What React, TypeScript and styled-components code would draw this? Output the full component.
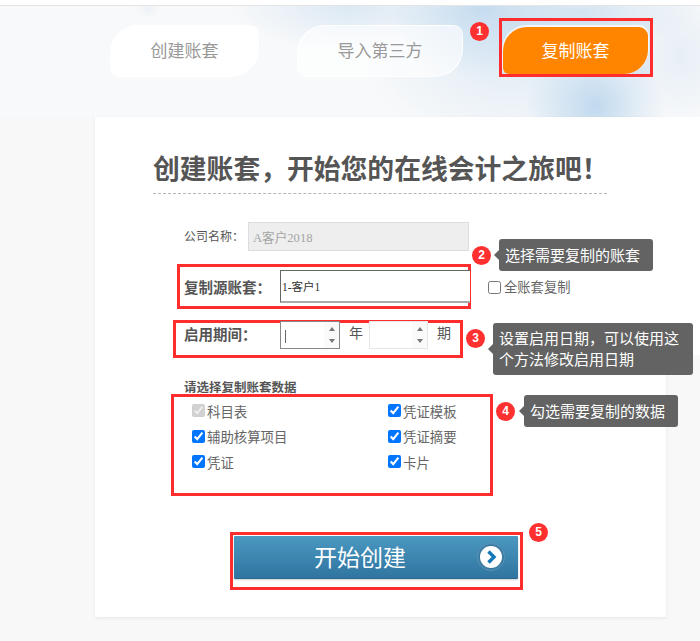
import React from "react";
import styled, { createGlobalStyle } from "styled-components";

const GlobalStyle = createGlobalStyle`
  html, body {
    margin: 0;
    padding: 0;
    background: #f8f8f8;
  }
  * {
    box-sizing: border-box;
  }
`;

const Page = styled.div`
  position: relative;
  width: 700px;
  height: 641px;
  overflow: hidden;
  background: #f8f8f8;
  font-family: "Liberation Sans", "Noto Sans CJK SC", sans-serif;
  color: #555;
`;

const TopBar = styled.div`
  height: 6px;
  background: #fff;
  border-bottom: 1px solid #e4e4e4;
`;

const Hero = styled.div`
  height: 111px;
  padding: 19px 0 0 110px;
  display: flex;
  align-items: flex-start;
  background:
    radial-gradient(ellipse 90px 70px at 480px 0px, rgba(192, 217, 238, 0.9), transparent),
    radial-gradient(ellipse 70px 70px at 595px 100px, rgba(190, 216, 238, 0.95), transparent),
    radial-gradient(ellipse 120px 40px at 580px 5px, rgba(205, 224, 240, 0.8), transparent),
    radial-gradient(ellipse 120px 45px at 350px 0px, rgba(212, 228, 242, 0.8), transparent),
    radial-gradient(ellipse 150px 90px at 510px 50px, rgba(218, 232, 244, 0.8), transparent),
    radial-gradient(ellipse 60px 70px at 680px 50px, rgba(226, 236, 245, 0.8), transparent),
    radial-gradient(ellipse 14px 9px at 148px 3px, rgba(226, 235, 244, 0.5), transparent),
    #f8f9fa;
`;

const Tab = styled.div<{ $width: number; $outlined?: boolean; $offset?: number }>`
  width: ${(p) => p.$width}px;
  height: 52px;
  margin-left: ${(p) => p.$offset ?? 0}px;
  padding-bottom: 3px;
  border-radius: 28px 10px 28px 10px;
  display: flex;
  align-items: center;
  justify-content: center;
  font-size: 17px;
  color: #999;
  background: rgba(255, 255, 255, ${(p) => (p.$outlined ? 0.6 : 0.95)});
  border: ${(p) => (p.$outlined ? "1px solid rgba(255, 255, 255, 0.9)" : "none")};
`;

const TabHighlight = styled.div`
  width: 154px;
  height: 59px;
  margin: -7px 0 0 36px;
  padding: 6px 2px 0 1px;
  border: 3px solid #ff2d2d;
  background: rgba(205, 222, 238, 0.5);
`;

const ActiveTab = styled.div`
  height: 47px;
  padding-bottom: 3px;
  border-radius: 24px 9px 24px 6px;
  display: flex;
  align-items: center;
  justify-content: center;
  font-size: 17px;
  color: #fff;
  background: #ff8400;
  box-shadow: 0 -1px 0 1px rgba(255, 255, 255, 0.7);
`;

const Card = styled.div`
  width: 571px;
  height: 500px;
  margin-left: 95px;
  padding: 33px 0 0 58px;
  background: #fff;
  box-shadow: 0 1px 3px rgba(0, 0, 0, 0.08);
`;

const SidePatch = styled.div`
  position: absolute;
  left: 666px;
  top: 117px;
  width: 34px;
  height: 238px;
  background: #fff;
`;

const Title = styled.h1`
  width: 454px;
  height: 44px;
  margin: 0;
  border-bottom: 1px dashed #b5b5b5;
  font-size: 26.8px;
  line-height: 41px;
  font-weight: bold;
  color: #555;
  white-space: nowrap;
`;

const NameRow = styled.div`
  height: 29px;
  margin: 28px 0 0 31px;
  display: flex;
  align-items: center;
`;

const NameLabel = styled.span`
  width: 64px;
  padding-bottom: 2px;
  font-size: 12px;
  color: #555;
`;

const NameInput = styled.div`
  width: 221px;
  height: 29px;
  padding-left: 4px;
  display: flex;
  align-items: center;
  background: #eee;
  border: 1px solid #ddd;
  font-family: "Liberation Serif", "Noto Sans CJK SC", serif;
  font-size: 12.6px;
  color: #a5a5a5;
`;

const SourceLine = styled.div`
  margin: 13px 0 0 24px;
  display: flex;
  align-items: center;
`;

const HighlightRow = styled.div<{ $width: number; $height: number; $pad: number }>`
  width: ${(p) => p.$width}px;
  height: ${(p) => p.$height}px;
  padding-left: ${(p) => p.$pad}px;
  display: flex;
  align-items: center;
  border: 3px solid #ff2d2d;
`;

const FieldLabel = styled.span<{ $width: number }>`
  width: ${(p) => p.$width}px;
  padding-bottom: 1px;
  font-size: 14.5px;
  font-weight: bold;
  color: #555;
  flex-shrink: 0;
  white-space: nowrap;
`;

const SourceInput = styled.div`
  width: 190px;
  height: 33px;
  padding-left: 1px;
  flex-shrink: 0;
  display: flex;
  align-items: center;
  border: 1px solid #666;
  border-bottom: 2px solid #aaa;
  border-right: none;
  background: #fff;
  font-family: "Liberation Serif", "Noto Sans CJK SC", serif;
  font-size: 11.5px;
  color: #333;
`;

const WholeCopy = styled.label`
  margin-left: 17px;
  display: flex;
  align-items: center;
  font-size: 13.3px;
  color: #666;
  white-space: nowrap;

  input {
    width: 13px;
    height: 13px;
    margin: 1px 3px 0 0;
  }
`;

const PeriodBox = styled(HighlightRow)`
  margin: 11px 0 0 20px;
  align-items: flex-start;
`;

const PeriodLabel = styled(FieldLabel)`
  line-height: 24px;
`;

const PeriodField = styled.div`
  margin-top: -2px;
  display: flex;
  align-items: flex-start;
`;

const Spinner = styled.div<{ $width: number; $focused?: boolean }>`
  position: relative;
  width: ${(p) => p.$width}px;
  height: 28px;
  border: 1px solid ${(p) => (p.$focused ? "#888" : "#e6e6e6")};
  background: #fff;
`;

const Caret = styled.span`
  position: absolute;
  left: 4px;
  top: 8px;
  width: 1px;
  height: 13px;
  background: #666;
`;

const SpinArrows = styled.div`
  position: absolute;
  top: 0;
  right: 0;
  bottom: 0;
  width: 15px;
  background: #fafafa;
  display: flex;
  flex-direction: column;
  align-items: center;
  justify-content: space-between;
  padding: 5px 0;
`;

const ArrowUp = styled.i`
  border: 3px solid transparent;
  border-top: none;
  border-bottom: 4px solid #777;
`;

const ArrowDown = styled.i`
  border: 3px solid transparent;
  border-bottom: none;
  border-top: 4px solid #777;
`;

const Unit = styled.span<{ $width: number }>`
  width: ${(p) => p.$width}px;
  padding-left: 9px;
  font-size: 14px;
  line-height: 24px;
  color: #555;
`;

const SectionTitle = styled.div`
  height: 12px;
  margin: 24px 0 0 31px;
  font-size: 12.5px;
  line-height: 13px;
  font-weight: bold;
  color: #555;
  white-space: nowrap;
`;

const DataBox = styled.div`
  width: 322px;
  height: 102px;
  margin-left: 18px;
  padding: 1px 0 0 18px;
  border: 3px solid #ff2d2d;
  display: grid;
  grid-template-columns: 196px 1fr;
  grid-auto-rows: 25.5px;
`;

const DataItem = styled.label`
  display: flex;
  align-items: center;
  font-size: 13.4px;
  color: #666;

  input {
    width: 13px;
    height: 13px;
    margin: 0 2px 0 0;
  }
`;

const StartBox = styled.div`
  width: 293px;
  height: 58px;
  margin: 36px 0 0 77px;
  padding: 1px 0 0 1px;
  border: 3px solid #ff2d2d;
`;

const StartButton = styled.div`
  width: 284px;
  height: 43px;
  padding: 0 13px 0 80px;
  display: flex;
  align-items: center;
  justify-content: space-between;
  border-radius: 1px;
  border-bottom: 1px solid #2b6a90;
  background: linear-gradient(#4b98c1, #2f75a0);
  box-shadow: 0 1px 2px rgba(0, 0, 0, 0.2);
  font-size: 23px;
  color: #fff;
`;

const StartLabel = styled.span`
  margin-bottom: 3px;
`;

const Badge = styled.span<{ $x: number; $y: number }>`
  position: absolute;
  left: ${(p) => p.$x - 9}px;
  top: ${(p) => p.$y - 9}px;
  width: 19px;
  height: 19px;
  border-radius: 50%;
  background: #ff3030;
  color: #fff;
  font-size: 12px;
  font-weight: bold;
  line-height: 19px;
  text-align: center;
`;

const Callout = styled.div<{ $x: number; $y: number; $w: number; $h: number }>`
  position: absolute;
  left: ${(p) => p.$x}px;
  top: ${(p) => p.$y}px;
  width: ${(p) => p.$w}px;
  height: ${(p) => p.$h}px;
  padding: 0 6px;
  display: flex;
  align-items: center;
  border-radius: 3px;
  background: #636363;
  color: #fff;
  font-size: 15px;
  line-height: 21px;

  &::before {
    content: "";
    position: absolute;
    left: -5px;
    top: 50%;
    margin-top: -5px;
    border: 5px solid transparent;
    border-left: none;
    border-right-color: #636363;
  }
`;

const ArrowIcon = () => (
  <svg width="28" height="28" viewBox="0 0 28 28">
    <circle cx="14" cy="14" r="13.5" fill="#3a7ba3" stroke="#5d93b5" />
    <circle cx="14" cy="14" r="11" fill="#fff" />
    <path d="M11.5 8.5 L17 14 L11.5 19.5" fill="none" stroke="#1578b8" strokeWidth="3.4" />
  </svg>
);

const SpinField = ({ width, focused }: { width: number; focused?: boolean }) => (
  <Spinner $width={width} $focused={focused}>
    {focused && <Caret />}
    <SpinArrows>
      <ArrowUp />
      <ArrowDown />
    </SpinArrows>
  </Spinner>
);

const dataItems = [
  { label: "科目表", disabled: true },
  { label: "凭证模板" },
  { label: "辅助核算项目" },
  { label: "凭证摘要" },
  { label: "凭证" },
  { label: "卡片" },
];

export default function App() {
  return (
    <Page>
      <GlobalStyle />
      <TopBar />
      <Hero>
        <Tab $width={149}>创建账套</Tab>
        <Tab $width={166} $outlined $offset={38}>
          导入第三方
        </Tab>
        <TabHighlight>
          <ActiveTab>复制账套</ActiveTab>
        </TabHighlight>
      </Hero>
      <Card>
        <Title>创建账套，开始您的在线会计之旅吧！</Title>
        <NameRow>
          <NameLabel>公司名称：</NameLabel>
          <NameInput>A客户2018</NameInput>
        </NameRow>
        <SourceLine>
          <HighlightRow $width={294} $height={45} $pad={4}>
            <FieldLabel $width={96}>复制源账套：</FieldLabel>
            <SourceInput>1-客户1</SourceInput>
          </HighlightRow>
          <WholeCopy>
            <input type="checkbox" readOnly />
            全账套复制
          </WholeCopy>
        </SourceLine>
        <PeriodBox $width={290} $height={38} $pad={8}>
          <PeriodLabel $width={96}>启用期间：</PeriodLabel>
          <PeriodField>
            <SpinField width={60} focused />
            <Unit $width={29}>年</Unit>
            <SpinField width={59} />
            <Unit $width={30}>期</Unit>
          </PeriodField>
        </PeriodBox>
        <SectionTitle>请选择复制账套数据</SectionTitle>
        <DataBox>
          {dataItems.map((item) => (
            <DataItem key={item.label}>
              <input type="checkbox" checked readOnly disabled={item.disabled} />
              {item.label}
            </DataItem>
          ))}
        </DataBox>
        <StartBox>
          <StartButton>
            <StartLabel>开始创建</StartLabel>
            <ArrowIcon />
          </StartButton>
        </StartBox>
      </Card>
      <SidePatch />

      <Badge $x={479} $y={31}>1</Badge>
      <Badge $x={481} $y={255}>2</Badge>
      <Badge $x={475} $y={338}>3</Badge>
      <Badge $x={505} $y={411}>4</Badge>
      <Badge $x={538} $y={532}>5</Badge>
      <Callout $x={499} $y={239} $w={154} $h={32}>选择需要复制的账套</Callout>
      <Callout $x={493} $y={323} $w={200} $h={52}>设置启用日期，可以使用这个方法修改启用日期</Callout>
      <Callout $x={524} $y={395} $w={154} $h={32}>勾选需要复制的数据</Callout>
    </Page>
  );
}
